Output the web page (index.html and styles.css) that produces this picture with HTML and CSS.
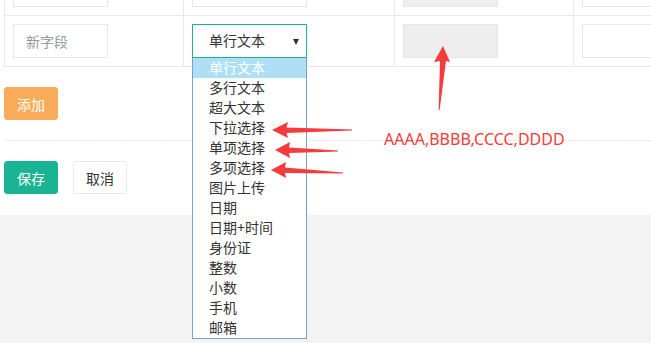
FILE: index.html
```html
<!DOCTYPE html>
<html lang="zh-CN">
<head>
  <meta charset="UTF-8" />
  <title>字段设置</title>
  <link rel="stylesheet" href="styles.css">
</head>
<body>

<div class="page">
  <table class="fields">
    <tr>
      <td><input class="field-input" type="text" value="" /></td>
      <td><div class="select"><span></span><i class="caret"></i></div></td>
      <td><div class="readonly"></div></td>
      <td><input class="field-input wide" type="text" /></td>
    </tr>
    <tr>
      <td><input class="field-input" type="text" placeholder="新字段" /></td>
      <td>
        <div class="select open">
          <span>单行文本</span><i class="caret"></i>
          <ul class="options">
            <li class="active">单行文本</li>
            <li>多行文本</li>
            <li>超大文本</li>
            <li>下拉选择</li>
            <li>单项选择</li>
            <li>多项选择</li>
            <li>图片上传</li>
            <li>日期</li>
            <li>日期+时间</li>
            <li>身份证</li>
            <li>整数</li>
            <li>小数</li>
            <li>手机</li>
            <li>邮箱</li>
          </ul>
        </div>
      </td>
      <td><div class="readonly"></div></td>
      <td><input class="field-input wide" type="text" /></td>
    </tr>
  </table>

  <div class="toolbar">
    <button class="btn btn-warning">添加</button>
  </div>

  <div class="divider"></div>

  <div class="toolbar">
    <button class="btn btn-primary">保存</button>
    <button class="btn btn-white">取消</button>
  </div>
</div>

<!-- 标注 -->
<svg class="marks" width="651" height="343" viewBox="0 0 651 343">
  <polygon points="443,46 450,62 446,61 439.6,110 438.6,110 440,61 434,62" />
  <polygon points="272,130 288,122 286.5,127.5 352,129.6 352,130.6 286.5,133 288,138" />
  <polygon points="275,150 290,142 289,147.5 338,150.5 338,151.5 289,153 290,158" />
  <polygon points="271,170 286,162 285,167.5 343,172.5 343,173.5 285,173 286,178" />
</svg>
<div class="note">AAAA,BBBB,CCCC,DDDD</div>

</body>
</html>
```

FILE: styles.css
```css
html {
  height: 100%;
}
body {
  margin: 0;
  min-height: 100%;
  background: #f3f3f4;
  font-family: "Noto Sans", "Noto Sans CJK SC", sans-serif;
  font-size: 14px;
  color: #333;
}
.page {
  display: flow-root;
  background: #fff;
  padding: 0 0 21px 4px;
}
.fields {
  margin-top: -36px;
  border-collapse: collapse;
  width: 647px;
  table-layout: fixed;
}
.fields td {
  border: 1px solid #e7e7e7;
  padding: 8px;
  vertical-align: top;
}
.fields td:nth-child(1) { width: 162px; }
.fields td:nth-child(2) { width: 194px; }
.fields td:nth-child(3) { width: 162px; }
.fields td:last-child {
  border-right: none;
  padding-right: 0;
}
.field-input {
  display: block;
  box-sizing: border-box;
  width: 95px;
  height: 34px;
  border: 1px solid #e5e6e7;
  padding: 6px 12px;
  font-family: inherit;
  font-size: 14px;
  color: #333;
  outline: none;
}
.field-input::placeholder {
  color: #999;
}
.field-input.wide {
  width: 100%;
  border-right: none;
}
.select {
  position: relative;
  box-sizing: border-box;
  width: 115px;
  height: 34px;
  border: 1px solid #e5e6e7;
  padding: 0 16px;
  line-height: 32px;
}
.select.open {
  border-color: #1ab394;
}
.caret {
  position: absolute;
  right: 7px;
  top: 14px;
  width: 0;
  height: 0;
  border-left: 3.5px solid transparent;
  border-right: 3.5px solid transparent;
  border-top: 6px solid #333;
}
.readonly {
  box-sizing: border-box;
  width: 95px;
  height: 34px;
  background: #eee;
  border: 1px solid #e5e6e7;
}
.options {
  position: absolute;
  left: -1px;
  top: 33px;
  z-index: 2;
  width: 115px;
  box-sizing: border-box;
  margin: 0;
  padding: 0;
  list-style: none;
  background: #fff;
  border: 1px solid #7b9fd8;
  border-top: none;
}
.options li {
  height: 20px;
  line-height: 20px;
  padding-left: 16px;
  color: #333;
}
.options li.active {
  background: #aedff5;
  color: #fff;
}
.toolbar {
  margin-top: 20px;
  display: flex;
  gap: 15px;
}
.btn {
  height: 33px;
  padding: 0 12px;
  border-radius: 3px;
  border: 1px solid transparent;
  font-family: inherit;
  font-size: 14px;
  color: #fff;
}
.btn-warning {
  background: #f8ac59;
  border-color: #f8ac59;
}
.btn-primary {
  background: #1ab394;
  border-color: #1ab394;
}
.btn-white {
  background: #fff;
  border-color: #e7eaec;
  color: #333;
}
.divider {
  margin-top: 20px;
  border-top: 1px dashed #e7e7e7;
}
.marks {
  position: absolute;
  left: 0;
  top: 0;
  z-index: 3;
  fill: #f63b3b;
}
.note {
  position: absolute;
  left: 384px;
  top: 128px;
  font-size: 16px;
  color: #f63b3b;
}
```
